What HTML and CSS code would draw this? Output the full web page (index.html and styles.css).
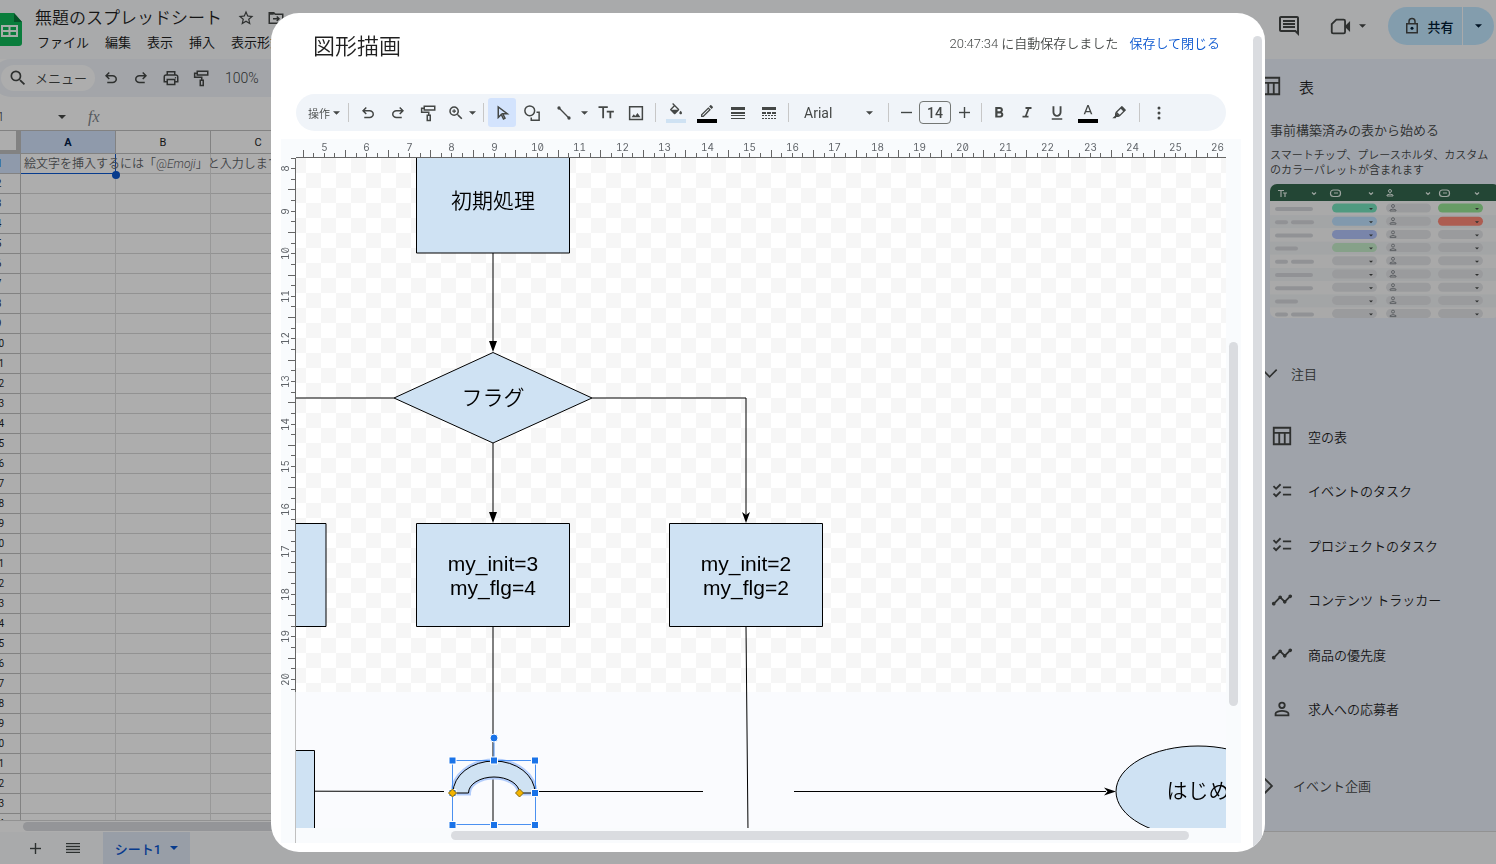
FILE: index.html
```html
<!DOCTYPE html>
<html lang="ja">
<head>
<meta charset="utf-8">
<meta name="viewport" content="width=device-width, initial-scale=1">
<title>無題のスプレッドシート</title>
<link rel="stylesheet" href="styles.css">
</head>
<body>
<svg class="sprite" aria-hidden="true">
  <symbol id="undo" viewBox="0 -960 960 960"><path d="M280-200v-80h284q63 0 109.500-40T720-420q0-60-46.500-100T564-560H312l104 104-56 56-200-200 200-200 56 56-104 104h252q97 0 166.500 63T800-420q0 94-69.500 157T564-200H280Z"/></symbol>
  <symbol id="redo" viewBox="0 -960 960 960"><path d="M396-200q-97 0-166.500-63T160-420q0-94 69.500-157T396-640h252L544-744l56-56 200 200-200 200-56-56 104-104H396q-63 0-109.500 40T240-420q0 60 46.500 100T396-280h284v80H396Z"/></symbol>
  <symbol id="roller" viewBox="0 0 24 24"><path d="M7 3h14v5H7zM7 5.500H3.500V11H13v4M11 15h4v7h-4z" class="line"/></symbol>
  <symbol id="print" viewBox="0 0 24 24"><path d="M7 8V3.500h10V8M7 17H3v-6.500A2.500 2.500 0 0 1 5.500 8h13a2.500 2.500 0 0 1 2.500 2.500V17h-4M7 14h10v6.500H7z" class="line"/><circle cx="18" cy="11.500" r="1"/></symbol>
  <symbol id="caret" viewBox="0 0 10 5"><path d="M0 0h10L5 5z"/></symbol>
  <symbol id="star" viewBox="0 0 24 24"><path d="M22 9.240l-7.190-.62L12 2 9.190 8.630 2 9.240l5.460 4.730L5.820 21 12 17.270 18.180 21l-1.630-7.030L22 9.240zM12 15.400l-3.760 2.270 1-4.280-3.320-2.880 4.380-.38L12 6.100l1.710 4.040 4.380.38-3.320 2.880 1 4.280L12 15.400z"/></symbol>
  <symbol id="move" viewBox="0 0 24 24"><path d="M3 19V5h6l2 2h10v12zM3 6.500h6M8 13h8M13 10l3 3-3 3" class="line"/></symbol>
  <symbol id="search" viewBox="0 0 24 24"><path d="M15.500 14h-.79l-.28-.27A6.470 6.470 0 0 0 16 9.500 6.500 6.500 0 1 0 9.500 16c1.610 0 3.090-.59 4.230-1.570l.27.28v.79l5 4.990L20.490 19l-4.990-5zm-6 0C7.010 14 5 11.990 5 9.500S7.010 5 9.500 5 14 7.010 14 9.500 11.990 14 9.500 14z"/></symbol>
  <symbol id="zoomin" viewBox="0 0 24 24"><path d="M15.500 14h-.79l-.28-.27A6.470 6.470 0 0 0 16 9.500 6.500 6.500 0 1 0 9.500 16c1.610 0 3.090-.59 4.230-1.570l.27.28v.79l5 4.990L20.490 19l-4.990-5zm-6 0C7.010 14 5 11.990 5 9.500S7.010 5 9.500 5 14 7.010 14 9.500 11.990 14 9.500 14zM10.300 7H8.700v1.700H7v1.600h1.700V12h1.600v-1.700H12V8.700h-1.700z"/></symbol>
  <symbol id="comment" viewBox="0 0 24 24"><path d="M22 4c0-1.100-.9-2-2-2H4c-1.100 0-2 .9-2 2v12c0 1.100.9 2 2 2h14l4 4V4zm-2 13.170L18.830 16H4V4h16v13.170zM18 12H6v2h12zm0-3H6v2h12zm0-3H6v2h12z"/></symbol>
  <symbol id="video" viewBox="0 0 24 24"><path d="M8 5h8a1.500 1.500 0 0 1 1.500 1.500v12A1.500 1.500 0 0 1 16 20H4.500A1.500 1.500 0 0 1 3 18.500V10z" class="line"/><path d="M17 12.500l6-6v12z"/></symbol>
  <symbol id="lock" viewBox="0 0 24 24"><path d="M5 9h14v12H5zM8 9V6a4 4 0 0 1 8 0v3" class="line"/><circle cx="12" cy="15" r="2"/></symbol>
  <symbol id="table" viewBox="0 0 24 24"><path d="M3 3h18v18H3zM3 8.500h18M9 8.500V21M15 8.500V21" class="line"/></symbol>
  <symbol id="check" viewBox="0 0 24 24"><path d="M22 7h-9v2h9V7zm0 8h-9v2h9v-2zM5.540 11 2 7.460l1.410-1.410 2.120 2.120 4.240-4.240 1.410 1.410L5.540 11zm0 8L2 15.460l1.410-1.410 2.120 2.120 4.240-4.240 1.410 1.410L5.540 19z"/></symbol>
  <symbol id="trend" viewBox="0 0 24 24"><path d="M23 8c0 1.100-.9 2-2 2-.18 0-.35-.02-.51-.07l-3.560 3.550c.05.16.07.34.07.52 0 1.100-.9 2-2 2s-2-.9-2-2c0-.18.02-.36.07-.52l-2.550-2.550c-.16.05-.34.07-.52.07s-.36-.02-.52-.07l-4.550 4.560c.05.16.07.33.07.51 0 1.100-.9 2-2 2s-2-.9-2-2 .9-2 2-2c.18 0 .35.02.51.07l4.560-4.550C8.020 9.360 8 9.180 8 9c0-1.100.9-2 2-2s2 .9 2 2c0 .18-.02.36-.07.52l2.550 2.550c.16-.05.34-.07.52-.07s.36.02.52.07l3.550-3.560C19.020 8.350 19 8.180 19 8c0-1.100.9-2 2-2s2 .9 2 2z"/></symbol>
  <symbol id="person" viewBox="0 0 24 24"><circle cx="12" cy="8" r="3" class="line"/><path d="M5 19v-2c0-1.700 4-3 7-3s7 1.300 7 3v2z" class="line"/></symbol>
  <symbol id="down" viewBox="0 0 24 24"><path d="M3 8l8.500 8.500L20 8" class="line"/></symbol>
  <symbol id="right" viewBox="0 0 24 24"><path d="M5 5l8 8-8 8" class="line"/></symbol>
  <symbol id="pointer" viewBox="0 0 24 24"><path d="M7 4v14l4-4 3 6 2-1-3-6h6z" class="line"/></symbol>
  <symbol id="shape" viewBox="0 0 24 24"><circle cx="9" cy="9" r="6.500" class="line"/><path d="M18 11h3.500v10.500H11V18" class="line"/></symbol>
  <symbol id="seg" viewBox="0 0 24 24"><path d="M5 5l14 14" class="line"/><circle cx="4.500" cy="4.500" r="2.500"/><circle cx="19.500" cy="19.500" r="2.500"/></symbol>
  <symbol id="tt" viewBox="0 0 24 24"><path d="M2 3v2.300h5V19h2.400V5.300h5V3zM22.500 9H13v2.300h3.600V19H19v-7.700h3.500z"/></symbol>
  <symbol id="image" viewBox="0 0 24 24"><path d="M3.500 3.500h17v17h-17z" class="line"/><path d="M6 17.500l3-4 2 2.500 3-4 4 5.500z"/></symbol>
  <symbol id="fill" viewBox="0 0 24 24"><path d="M16.560 8.940L7.620 0 6.210 1.410l2.380 2.380-5.150 5.150c-.59.59-.59 1.540 0 2.120l5.500 5.500c.29.29.68.44 1.060.44s.77-.15 1.060-.44l5.500-5.500c.59-.58.59-1.530 0-2.120zM5.210 10L10 5.210 14.790 10H5.210zM19 11.500s-2 2.170-2 3.500c0 1.100.9 2 2 2s2-.9 2-2c0-1.330-2-3.500-2-3.500z"/></symbol>
  <symbol id="pen" viewBox="0 0 24 24"><path d="M14.060 9.020l.92.92L5.920 19H5v-.92l9.060-9.060M17.660 3c-.25 0-.51.1-.7.29l-1.830 1.830 3.750 3.750 1.830-1.830c.39-.39.39-1.020 0-1.410l-2.340-2.340c-.2-.2-.45-.29-.71-.29zm-3.600 3.190L3 17.250V21h3.750L17.810 9.940l-3.750-3.750z"/></symbol>
  <symbol id="weight" viewBox="0 0 14 12"><path d="M0 0h14v3H0zM0 5h14v2H0zM0 8h14v1H0zM0 11h14v1H0z"/></symbol>
  <symbol id="dash" viewBox="0 0 14 12"><path d="M0 0h14v3H0zM0 5h4v2H0zM5 5h4v2H5zM10 5h4v2h-4zM0 8h2v1H0zM3 8h2v1H3zM6 8h2v1H6zM9 8h2v1H9zM12 8h2v1h-2zM0 11h2v1H0zM3 11h2v1H3zM6 11h2v1H6zM9 11h2v1H9zM12 11h2v1h-2z"/></symbol>
  <symbol id="minus" viewBox="0 0 11 11"><path d="M0 5h11v1H0z" class="thin"/></symbol>
  <symbol id="plus" viewBox="0 0 11 11"><path d="M0 5h5V0h1v5h5v1H6v5H5V6H0z" class="thin"/></symbol>
  <symbol id="bold" viewBox="0 0 24 24"><path d="M15.600 10.790c.97-.67 1.650-1.770 1.650-2.790 0-2.260-1.750-4-4-4H7v14h7.040c2.090 0 3.710-1.700 3.710-3.790 0-1.520-.86-2.820-2.150-3.420zM10 6.500h3c.83 0 1.500.67 1.500 1.500s-.67 1.500-1.500 1.500h-3v-3zm3.500 9H10v-3h3.500c.83 0 1.500.67 1.500 1.500s-.67 1.500-1.500 1.500z"/></symbol>
  <symbol id="italic" viewBox="0 0 24 24"><path d="M10 4v2.500h2.700L9.300 15.500H6V18h8v-2.500h-2.300l3.400-9H18V4z"/></symbol>
  <symbol id="underline" viewBox="0 0 24 24"><path d="M12 17c3.310 0 6-2.690 6-6V3h-2.500v8c0 1.930-1.570 3.500-3.500 3.500S8.500 12.930 8.500 11V3H6v8c0 3.310 2.690 6 6 6zm-7 2v2h14v-2H5z"/></symbol>
  <symbol id="color" viewBox="0 0 24 24"><path d="M11 3 5.500 17h2.250l1.120-3h6.250l1.120 3h2.250L13 3h-2zm-1.380 9L12 5.670 14.380 12H9.620z"/></symbol>
  <symbol id="marker" viewBox="0 0 24 24"><path d="M7 11l6 6-2 1H8l-1 2H2l4-4v-3z"/><path d="M8 11l8-8 5 5-8 8z" class="line"/><path d="M14 5l3-3 5 5-3 3z"/></symbol>
  <symbol id="more" viewBox="0 0 4 14"><circle cx="2" cy="2" r="1.500"/><circle cx="2" cy="7" r="1.500"/><circle cx="2" cy="12" r="1.500"/></symbol>
  <symbol id="bars" viewBox="0 0 14 10"><path d="M0 0h14v1H0zM0 3h14v1H0zM0 6h14v1H0zM0 9h14v1H0z" class="thin"/></symbol>
</svg>

<div class="app">
  <header class="top">
    <svg class="logo" viewBox="0 0 32 34"><path d="M2 1h22l8 9v21a3 3 0 0 1-3 3H2z" fill="#10b859"/><path d="M24 1l8 9h-8z" fill="#0a7a3c"/><path d="M12 14h15v10H12zM12 19h15M19.500 14v10" fill="none" stroke="#f4fff8" stroke-width="2"/></svg>
    <div class="names">
      <div class="name-row"><h1 class="doc-name">無題のスプレッドシート</h1>
        <button class="plain" aria-label="スター"><svg class="ic18"><use href="#star"/></svg></button>
        <button class="plain" aria-label="移動"><svg class="ic18"><use href="#move"/></svg></button></div>
      <nav class="menus"><button class="menu">ファイル</button><button class="menu">編集</button><button class="menu">表示</button><button class="menu">挿入</button><button class="menu">表示形式</button></nav>
    </div>
    <div class="top-actions">
      <button class="plain" aria-label="コメント"><svg class="ic24"><use href="#comment"/></svg></button>
      <button class="plain meet" aria-label="会議"><svg class="ic22"><use href="#video"/></svg><svg class="caret-s"><use href="#caret"/></svg></button>
      <div class="share"><button class="share-main"><svg class="ic18"><use href="#lock"/></svg>共有</button><button class="share-more" aria-label="共有オプション"><svg class="caret-s"><use href="#caret"/></svg></button></div>
    </div>
  </header>

  <div class="middle">
    <main class="work">
      <div class="bar">
        <label class="find"><svg class="ic20"><use href="#search"/></svg><input class="find-in" type="text" placeholder="メニュー" aria-label="メニュー"></label>
        <button class="bar-btn" aria-label="元に戻す"><svg class="ic18"><use href="#undo"/></svg></button>
        <button class="bar-btn" aria-label="やり直し"><svg class="ic18"><use href="#redo"/></svg></button>
        <button class="bar-btn" aria-label="印刷"><svg class="ic18"><use href="#print"/></svg></button>
        <button class="bar-btn" aria-label="書式のコピー"><svg class="ic18"><use href="#roller"/></svg></button>
        <button class="bar-zoom">100%</button>
      </div>
      <div class="formula"><span class="cell-ref">A1</span><svg class="caret-m"><use href="#caret"/></svg><span class="fx">fx</span></div>
      <div class="sheet-wrap">
        <table class="sheet">
          <thead><tr><th class="corner"></th><th class="on" scope="col">A</th><th scope="col">B</th><th scope="col">C</th><th scope="col">D</th><th scope="col">E</th><th scope="col">F</th></tr></thead>
          <tbody id="rows"></tbody>
        </table>
      </div>
      <div class="hscroll"><div class="hthumb"></div></div>
    </main>
    <aside class="side">
      <div class="side-head"><svg class="ic22"><use href="#table"/></svg><h2 class="side-title">表</h2></div>
      <p class="side-lead">事前構築済みの表から始める</p>
      <p class="side-note">スマートチップ、プレースホルダ、カスタムのカラーパレットが含まれます</p>
      <svg class="preview" id="preview" viewBox="0 0 230 134"></svg>
      <button class="group featured"><svg class="ic20"><use href="#down"/></svg>注目</button>
      <ul class="templates">
        <li class="tpl"><svg class="ic22"><use href="#table"/></svg>空の表</li>
        <li class="tpl"><svg class="ic22"><use href="#check"/></svg>イベントのタスク</li>
        <li class="tpl"><svg class="ic22"><use href="#check"/></svg>プロジェクトのタスク</li>
        <li class="tpl"><svg class="ic22"><use href="#trend"/></svg>コンテンツ トラッカー</li>
        <li class="tpl"><svg class="ic22"><use href="#trend"/></svg>商品の優先度</li>
        <li class="tpl"><svg class="ic22"><use href="#person"/></svg>求人への応募者</li>
      </ul>
      <button class="group events"><svg class="ic22"><use href="#right"/></svg>イベント企画</button>
    </aside>
  </div>
  <footer class="tabs">
    <button class="plain add" aria-label="シートを追加"><svg class="ic10"><use href="#plus"/></svg></button>
    <button class="plain all" aria-label="すべてのシート"><svg class="bars"><use href="#bars"/></svg></button>
    <button class="tab">シート1<svg class="caret-m"><use href="#caret"/></svg></button>
  </footer>
</div>

<div class="scrim">
  <section class="dialog" role="dialog" aria-labelledby="dlg-title">
    <div class="content">
      <div class="dlg-head">
        <h2 class="dlg-title" id="dlg-title">図形描画</h2>
        <span class="saved">20:47:34 に自動保存しました</span>
        <button class="save">保存して閉じる</button>
      </div>
      <div class="tools">
        <button class="t-ops">操作<svg class="caret-s"><use href="#caret"/></svg></button><i class="sep"></i>
        <button class="t" aria-label="元に戻す"><svg class="ic18"><use href="#undo"/></svg></button>
        <button class="t" aria-label="やり直し"><svg class="ic18"><use href="#redo"/></svg></button>
        <button class="t" aria-label="書式のコピー"><svg class="ic18"><use href="#roller"/></svg></button>
        <button class="t-wide" aria-label="ズーム"><svg class="ic18"><use href="#zoomin"/></svg><svg class="caret-s"><use href="#caret"/></svg></button><i class="sep"></i>
        <button class="t-on" aria-label="選択"><svg class="ic18"><use href="#pointer"/></svg></button>
        <button class="t" aria-label="図形"><svg class="ic18"><use href="#shape"/></svg></button>
        <button class="t-line" aria-label="線"><svg class="ic16"><use href="#seg"/></svg><svg class="caret-s"><use href="#caret"/></svg></button>
        <button class="t" aria-label="テキスト ボックス"><svg class="ic18"><use href="#tt"/></svg></button>
        <button class="t" aria-label="画像"><svg class="ic18"><use href="#image"/></svg></button><i class="sep"></i>
        <button class="t-ink" aria-label="塗りつぶしの色"><svg class="ic16"><use href="#fill"/></svg><i class="ink pale"></i></button>
        <button class="t-ink" aria-label="枠線の色"><svg class="ic16"><use href="#pen"/></svg><i class="ink"></i></button>
        <button class="t-ink" aria-label="枠線の太さ"><svg class="lines"><use href="#weight"/></svg></button>
        <button class="t-ink" aria-label="枠線の破線"><svg class="lines"><use href="#dash"/></svg></button><i class="sep"></i>
        <label class="font-box"><select class="font" aria-label="フォント"><option>Arial</option></select><svg class="caret-s"><use href="#caret"/></svg></label><i class="sep"></i>
        <button class="t-step" aria-label="縮小"><svg class="ic12"><use href="#minus"/></svg></button>
        <input class="size" type="text" value="14" aria-label="フォントサイズ">
        <button class="t-step" aria-label="拡大"><svg class="ic12"><use href="#plus"/></svg></button><i class="sep"></i>
        <button class="t-b" aria-label="太字"><svg class="ic18"><use href="#bold"/></svg></button>
        <button class="t" aria-label="斜体"><svg class="ic18"><use href="#italic"/></svg></button>
        <button class="t" aria-label="下線"><svg class="ic18"><use href="#underline"/></svg></button>
        <button class="t-ink" aria-label="文字の色"><svg class="ic16"><use href="#color"/></svg><i class="ink"></i></button>
        <button class="t-hl" aria-label="ハイライト"><svg class="ic16"><use href="#marker"/></svg></button><i class="sep"></i>
        <button class="t" aria-label="その他"><svg class="dots"><use href="#more"/></svg></button>
      </div>
      <div class="board">
        <svg class="rule-x" id="rule-x"></svg>
        <svg class="rule-y" id="rule-y"></svg>
        <svg class="canvas">
          <defs>
            <pattern id="checks" x="10" y="15" width="30" height="30" patternUnits="userSpaceOnUse"><rect width="30" height="30" fill="#fff"/><path d="M0 0h15v15H0zM15 15h15v15H15z" fill="#f6f6f6"/></pattern>
          </defs>
          <rect width="100%" height="534" fill="url(#checks)"/>
          <g transform="translate(-296 -158)">
            <g class="wire"><path d="M493 253v94M493 443v72M493 627v201M290 398h104M592 398h154v118M746 627l2 205M315 791.200l129 .3M536 791.500h167M794 791.500h312"/></g>
            <path d="M493 352l-4-11h8zM493 523l-4-11h8z"/>
            <path d="M746 523l-4-11 4 3 4-3zM1116 791.500l-12-4 3.500 4-3.500 4z"/>
            <g class="box">
              <path d="M416.500 140.500h153V253h-153zM290.500 523.500h35.500v103h-35.500zM416.500 523.500h153v103h-153zM669.500 523.500h153v103h-153zM290.500 750.500h24v90h-24zM394 398l99-45.500 99 45.500-99 45z"/>
              <ellipse cx="1198" cy="791.500" rx="82" ry="45.500"/>
            </g>
            <g class="jp"><text x="493" y="208">初期処理</text><text x="493" y="405">フラグ</text><text x="1198" y="798">はじめ</text></g>
            <g class="en"><text x="493" y="571">my_init=3</text><text x="493" y="595">my_flg=4</text><text x="746" y="571">my_init=2</text><text x="746" y="595">my_flg=2</text></g>
            <path class="glow" d="M453 793a41 32 0 0 1 82 0h-15.500a25.500 16 0 0 0-51 0z"/>
            <path class="arc" d="M453 793a41 32 0 0 1 82 0h-15.500a25.500 16 0 0 0-51 0z"/>
            <path class="pick" d="M452.500 760.500h83v64h-83zM494 742v18"/>
            <path class="grip" d="M449 757h7v7h-7zM490.500 757h7v7h-7zM531.500 757h7v7h-7zM449 789.500h7v7h-7zM531.500 789.500h7v7h-7zM449 821.500h7v7h-7zM490.500 821.500h7v7h-7zM531.500 821.500h7v7h-7z"/>
            <circle class="grip" cx="494" cy="738" r="4"/>
            <path class="gold" d="M452.500 789l4 4-4 4-4-4zM519.500 789l4 4-4 4-4-4z"/>
          </g>
        </svg>
        <div class="vbar"><div class="thumb-y"></div></div>
        <div class="hbar"><div class="thumb-x"></div></div>
      </div>
    </div>
    <div class="dlg-scroll"></div>
  </section>
</div>
<script src="app.js"></script>
</body>
</html>
```
FILE: styles.css
```css
* { box-sizing: border-box; }
body { margin: 0; font-family: Roboto, "Noto Sans CJK JP", sans-serif; font-size: 13px; font-weight: 350; color: #1f1f1f; }
button, input, select { font: inherit; color: inherit; border: 0; background: none; padding: 0; margin: 0; }
button { display: flex; align-items: center; justify-content: center; white-space: nowrap; }
h1, h2, p, ul { margin: 0; padding: 0; font-weight: 350; }
svg { flex: none; fill: #444746; }
.sprite { display: none; }
.line { fill: none; stroke: #444746; stroke-width: 2; }
.thin { stroke: #444746; stroke-width: .4; }
.ic10, .ic12 { width: 11px; height: 11px; }
.ic16 { width: 16px; height: 16px; }
.ic18 { width: 18px; height: 18px; }
.ic20 { width: 20px; height: 20px; }
.ic22 { width: 22px; height: 22px; }
.ic24 { width: 24px; height: 24px; }
.caret-s { width: 7px; height: 4px; }
.caret-m { width: 8px; height: 4px; }

.app { display: flex; flex-direction: column; height: 100vh; overflow: hidden; background: #f9fbfd; }
.top { display: flex; height: 59px; flex: none; }
.logo { width: 32px; height: 34px; margin: 12px 0 0 -10px; }
.names { padding-left: 7px; }
.name-row { display: flex; align-items: center; gap: 12px; height: 24px; margin-top: 6px; padding-left: 6px; }
.doc-name { font-size: 17px; line-height: 24px; margin-right: 3px; }
.menus { display: flex; height: 22px; font-weight: 400; }
.menu { padding: 0 8px; }
.top-actions { margin-left: auto; display: flex; align-items: center; height: 52px; padding-right: 2px; }
.meet { gap: 8px; margin: 0 22px 0 28px; }
.share { display: flex; height: 38px; border-radius: 19px; overflow: hidden; gap: 1px; }
.share-main, .share-more { background: #c2e7ff; color: #001d35; font-weight: 500; }
.share-main { width: 74px; gap: 6px; padding-left: 7px; }
.share-more { width: 31px; }
.share svg { fill: #001d35; }

.middle { display: flex; flex: 1; min-height: 0; }
.work { flex: 1; min-width: 0; display: flex; flex-direction: column; background: #fff; }
.bar { display: flex; align-items: center; height: 38px; flex: none; background: #f0f4f9; border-radius: 19px 0 0 19px; margin-left: -8px; padding-left: 9px; }
.find { display: flex; align-items: center; gap: 7px; width: 94px; height: 26px; border-radius: 13px; background: #fff; padding-left: 7px; }
.find-in { width: 56px; min-width: 0; outline: 0; }
.find-in::placeholder { color: #444746; opacity: 1; }
.bar-btn { width: 30px; height: 28px; }
.bar-btn:first-of-type { margin-left: 1px; }
.bar-zoom { margin-left: 9px; font-size: 14px; color: #444746; }
.formula { display: flex; align-items: center; height: 33px; flex: none; padding-top: 6px; }
.cell-ref { margin-left: -10px; width: 68px; font-size: 12px; }
.fx { margin-left: 22px; font: italic 16px "Liberation Serif", serif; color: #80868b; }
.sheet-wrap { flex: 1; min-height: 0; overflow: hidden; border-top: 1px solid #c0c0c0; }
.sheet { table-layout: fixed; width: 614px; border-collapse: separate; border-spacing: 0; margin-left: -23px; font-size: 12px; }
.sheet th, .sheet td { height: 20px; padding: 0; border-right: 1px solid #e1e1e1; border-bottom: 1px solid #d8d8d8; line-height: 19px; overflow: visible; white-space: nowrap; }
.sheet th { font-weight: 400; font-size: 11px; border-color: #c0c0c0; text-align: center; }
.sheet tbody th { font-size: 10px; }
.sheet thead th { height: 23px; width: 95px; }
.sheet thead .corner { width: 44px; box-shadow: inset -4px -3px #c0c0c0; }
.sheet thead .on, .sheet tbody .on { background: #d3e3fd; }
.sheet thead .on { font-weight: 700; color: #041e49; }
.sheet tbody .on { color: #0b57d0; padding-left: 2px; }
.sheet .active { position: relative; padding: 2px 0 0 3px; line-height: 17px; color: #5f6368; border-bottom-color: #0b57d0; border-right-color: #0b57d0; }
.knob { position: absolute; right: -5px; bottom: -6px; width: 8px; height: 8px; border-radius: 4px; background: #0b57d0; }
.hscroll { height: 12px; flex: none; border-top: 1px solid #d8d8d8; padding: 1px 0 0 23px; }
.hthumb { height: 9px; border-radius: 5px; background: #dadce0; }

.side { width: 248px; flex: none; display: flex; flex-direction: column; background: #ebf0fb; border-bottom: 1px solid #d8d8d8; padding-left: 12px; overflow: hidden; }
.side-head { display: flex; align-items: center; gap: 17px; height: 54px; flex: none; }
.side-title { font-size: 15px; }
.side-lead { margin: 8px 0 0 10px; line-height: 20px; white-space: nowrap; color: #444746; }
.side-note { margin: 7px 0 0 10px; font-size: 11px; line-height: 15px; color: #444746; }
.preview { width: 230px; height: 134px; margin: 6px 0 0 10px; }
.group { gap: 11px; justify-content: flex-start; height: 24px; flex: none; color: #444746; }
.featured { margin-top: 43px; }
.templates { list-style: none; display: grid; grid-auto-rows: 1fr; height: 327px; flex: none; margin-top: 24px; }
.tpl { display: flex; align-items: center; gap: 15px; padding-left: 11px; }
.events { margin-top: 37px; }
.tabs { display: flex; height: 32px; flex: none; }
.add { width: 70px; }
.all { width: 6px; }
.bars { width: 14px; height: 10px; }
.tab { width: 87px; gap: 9px; margin-left: 27px; background: #e1e9f7; color: #0b57d0; font-weight: 500; }
.tab svg { fill: #0b57d0; }

.scrim { position: fixed; inset: 0; display: flex; padding: 13px 231px 12px 271px; background: rgba(0, 0, 0, .32); }
.dialog { flex: 1; min-width: 0; display: flex; background: #fff; border-radius: 28px; overflow: hidden; }
.content { flex: 1; min-width: 0; display: flex; flex-direction: column; padding: 0 12px 9px 10px; }
.dlg-scroll { width: 9px; margin: 23px 3px 0 0; background: #dadce0; border-radius: 5px 5px 0 0; }
.dlg-head { display: flex; height: 81px; flex: none; padding: 18px 21px 0 32px; line-height: 26px; color: #444746; }
.dlg-title { font-size: 22px; line-height: 32px; color: #1f1f1f; margin-right: auto; }
.save { height: 26px; margin-left: 11px; color: #0b57d0; }
.tools { display: flex; align-items: center; height: 37px; flex: none; margin: 0 15px; border-radius: 19px; background: #f0f4f9; color: #444746; overflow: hidden; }
.tools button { height: 29px; flex: none; }
.tools .t { width: 30px; }
.tools .t-ops { width: 48px; gap: 3px; padding-left: 8px; font-size: 11px; }
.sep { width: 1px; height: 19px; margin: 0 4px; background: #c7c7c7; flex: none; }
.tools .t-wide { width: 36px; gap: 4px; }
.tools .t-on { width: 28px; margin-right: 1px; border-radius: 3px; background: #d3e3fd; }
.t-on svg { fill: #041e49; }
.tools .t-line { width: 44px; gap: 9px; padding-left: 6px; }
.tools .t-ink { display: grid; width: 31px; place-items: center; align-content: center; }
.ink { width: 20px; height: 4px; background: #000; }
.ink.pale { background: #cfe2f3; }
.lines { width: 14px; height: 12px; }
.font-box { display: flex; align-items: center; width: 91px; padding: 0 11px; flex: none; }
.font { flex: 1; appearance: none; font-size: 14px; font-weight: 400; outline: 0; }
.tools .t-step { width: 26px; }
.size { width: 32px; height: 23px; border: 1px solid #747775; border-radius: 4px; text-align: center; font-size: 14px; font-weight: 500; flex: none; }
.tools .t-b { width: 26px; }
.tools .t-hl { width: 32px; }
.dots { width: 4px; height: 14px; }

.board { flex: 1; min-height: 0; display: grid; grid-template: 19px 1fr 15px / 15px 1fr 15px; margin-top: 8px; background: #f9fbfd; }
.rule-x { grid-area: 1 / 2; width: 100%; height: 100%; border-bottom: 1px solid #666; }
.rule-y { grid-area: 2 / 1 / 4 / 2; width: 100%; height: 100%; border-right: 1px solid #c0c0c0; overflow: visible; }
.rule-x text, .rule-y text { font: 10px Inter, sans-serif; font-feature-settings: "zero", "tnum"; text-anchor: middle; fill: #5f6368; }
.tick { stroke: #666; shape-rendering: crispEdges; fill: none; }
.canvas { grid-area: 2 / 2; width: 100%; height: 100%; background: #fafbfe; fill: #000; }
.wire { fill: none; stroke: #000; stroke-width: 1; }
.box, .arc { fill: #cfe2f3; stroke: #000; stroke-width: 1; }
.glow { fill: none; stroke: #b3cdfb; stroke-width: 5; }
.pick { fill: none; stroke: #4a90f0; }
.grip { fill: #1a73e8; stroke: #fff; stroke-width: 1; }
.gold { fill: #f4b400; stroke: #8a6a0a; }
.jp { font: 350 21px "Noto Sans CJK JP", sans-serif; text-anchor: middle; }
.en { font: 21px "Liberation Sans", sans-serif; text-anchor: middle; }
.vbar { grid-area: 2 / 3; display: grid; grid-template-rows: 184fr 364fr 122fr; }
.thumb-y { grid-row: 2; width: 9px; margin-left: 3px; border-radius: 5px; background: #dadce0; }
.hbar { grid-area: 3 / 2; display: grid; grid-template-columns: 155fr 738fr 37fr; }
.thumb-x { grid-column: 2; height: 9px; margin-top: 3px; border-radius: 5px; background: #dadce0; }
```
FILE: app.js
```js
// Spreadsheet rows
let rows = '';
for (let n = 1; n <= 34; n++) {
  const first = n === 1
    ? '<td class="active">絵文字を挿入するには「@<em>Emoji</em>」と入力します<span class="knob"></span></td>'
    : '<td></td>';
  rows += `<tr><th scope="row"${n === 1 ? ' class="on"' : ''}>${n}</th>${first}${'<td></td>'.repeat(5)}</tr>`;
}
document.getElementById('rows').innerHTML = rows;

// Rulers: one unit is 42.55px, with half and quarter ticks
const unit = 42.55;
let tx = '', lx = '';
for (let q = 18; q <= 104; q++) {
  const x = Math.floor(28.3 + (q / 4 - 5) * unit) + 0.5;
  tx += `M${x} 19v${q % 4 === 2 ? -8 : -5}`;
  if (q % 4 === 0) lx += `<text x="${x}" y="12">${q / 4}</text>`;
}
document.getElementById('rule-x').innerHTML = `<path class="tick" d="${tx}"/>${lx}`;

let ty = 'M14.5 0V534', ly = '';
for (let q = 31; q <= 81; q++) {
  const y = Math.floor(10.7 + (q / 4 - 8) * unit) + 0.5;
  ty += `M15 ${y}h${q % 4 === 2 ? -8 : -5}`;
  if (q % 4 === 0) ly += `<text transform="translate(8 ${y}) rotate(-90)">${q / 4}</text>`;
}
document.getElementById('rule-y').innerHTML = `<path class="tick" d="${ty}"/>${ly}`;

// Table preview thumbnail
const tints = [['#75e3bd', '#98e696'], ['#bfe2ff', '#ff8a78'], ['#b3c4fb', '#e4e5e8'], ['#c6eecb', '#e4e5e8']];
const bars = [[38], [13, 23], [38], [23], [13, 23], [38], [38], [23], [13, 23]];
const pill = (x, y, c) => `<rect x="${x}" y="${y}" width="45" height="9" rx="4.500" fill="${c}"/>`;
const drop = (x, y) => `<path d="M${x} ${y}h4l-2 2z" fill="#444746"/>`;
const man = (x, y, c) => `<circle cx="${x}" cy="${y - 2}" r="1.500" fill="none" stroke="${c}"/><path d="M${x - 3} ${y + 3}v-1q3-2 6 0v1z" fill="none" stroke="${c}"/>`;
let p = '<clipPath id="round"><rect width="230" height="134" rx="7"/></clipPath><g clip-path="url(#round)"><rect width="230" height="134" fill="#fafafa"/>';
bars.forEach((set, i) => {
  const y = 24 + i * 13.2;
  if (i % 2) p += `<rect y="${y - 6}" width="230" height="13" fill="#f1f3f5"/>`;
  let x = 5;
  set.forEach(w => { p += `<rect x="${x}" y="${y - 1}" width="${w}" height="4" rx="2" fill="#d6d8dc"/>`; x += w + 3; });
  const [a, b] = tints[i] || ['#e4e5e8', '#e4e5e8'];
  p += pill(62, y - 4.5, a) + pill(116, y - 4.5, '#e4e5e8') + pill(168, y - 4.5, b);
  p += drop(99, y) + drop(205, y) + man(123, y, '#8c9196');
});
p += '<rect width="230" height="17" fill="#34674f"/><g fill="none" stroke="#e8f3ec" stroke-width="1.200">';
[42, 99, 156, 205].forEach(x => { p += `<path d="M${x} 8.500l2 2 2-2"/>`; });
p += '<path d="M8 6.500h6M11 6v7M13 9h4M15 9v4"/><rect x="60.500" y="6" width="10" height="6.500" rx="3"/><rect x="169.500" y="6" width="10" height="6.500" rx="3"/><path d="M64 9h4M173 9h4"/></g>';
p += man(120, 9, '#e8f3ec') + '</g>';
document.getElementById('preview').innerHTML = p;
```
